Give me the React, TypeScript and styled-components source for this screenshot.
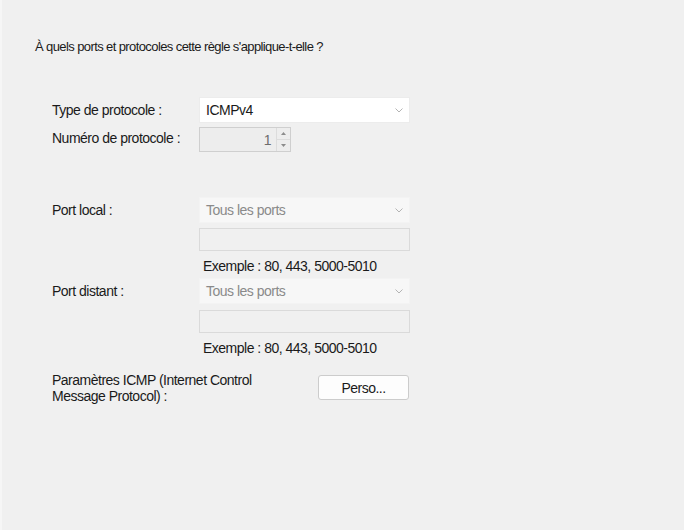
import React from 'react'
import styled, { createGlobalStyle } from 'styled-components'

const GlobalStyle = createGlobalStyle`
    html, body {
        margin: 0;
        padding: 0;
        background: #f0f0f0;
    }
    body {
        font-family: 'Liberation Sans', Arial, sans-serif;
        font-size: 14px;
        color: #1a1a1a;
    }
`

const Page = styled.div`
    width: 684px;
    height: 530px;
    box-sizing: border-box;
    background: #f0f0f0;
    border-left: 2px solid #f6f6f6;
    padding: 38px 0 0 33px;
    letter-spacing: -0.5px;
`

const Heading = styled.div`
    height: 18px;
    line-height: 18px;
    font-size: 13px;
    letter-spacing: -0.6px;
`

const Form = styled.div`
    display: grid;
    grid-template-columns: 147px 211px;
    margin: 41px 0 0 17px;
    align-items: center;
`

const Label = styled.div<{ $top?: number; $pad?: number }>`
    grid-column: 1;
    align-self: ${(p) => (p.$pad !== undefined ? 'start' : 'center')};
    line-height: 16px;
    white-space: nowrap;
    margin-top: ${(p) => p.$top ?? 0}px;
    padding-top: ${(p) => p.$pad ?? 0}px;
`

const Control = styled.div<{ $top?: number }>`
    grid-column: 2;
    margin-top: ${(p) => p.$top ?? 0}px;
`

const Select = styled.div<{ $disabled?: boolean; $top?: number }>`
    height: 26px;
    box-sizing: border-box;
    display: flex;
    align-items: center;
    justify-content: space-between;
    padding: 0 6px;
    margin-top: ${(p) => p.$top ?? 0}px;
    background: ${(p) => (p.$disabled ? '#f7f7f7' : '#ffffff')};
    border: 1px solid ${(p) => (p.$disabled ? '#f3f3f3' : '#ececec')};
    color: ${(p) => (p.$disabled ? '#8a8a8a' : '#1a1a1a')};
`

const Chevron = () => (
    <svg width="8" height="5" viewBox="0 0 8 5">
        <polyline points="0.5,0.5 4,4 7.5,0.5" fill="none" stroke="#b4b4b4" strokeWidth="1" />
    </svg>
)

const Spinner = styled.div`
    width: 92px;
    height: 25px;
    box-sizing: border-box;
    display: flex;
    border: 1px solid #cfcfcf;
    background: #ededed;
    margin-top: 4px;
`

const SpinValue = styled.div`
    flex: 1;
    display: flex;
    align-items: center;
    justify-content: flex-end;
    padding-right: 5px;
    color: #6d6d6d;
`

const SpinButtons = styled.div`
    width: 13px;
    display: flex;
    flex-direction: column;
    border-left: 1px solid #dcdcdc;
`

const SpinButton = styled.div<{ $last?: boolean }>`
    flex: 1;
    display: flex;
    align-items: center;
    justify-content: center;
    border-top: ${(p) => (p.$last ? '1px solid #dcdcdc' : 'none')};
`

const Arrow = ({ up }: { up?: boolean }) => (
    <svg width="5" height="3" viewBox="0 0 5 3">
        <polygon points={up ? '0,3 2.5,0 5,3' : '0,0 2.5,3 5,0'} fill="#8c8c8c" />
    </svg>
)

const TextInput = styled.div<{ $top?: number }>`
    height: 23px;
    box-sizing: border-box;
    border: 1px solid #dadada;
    background: #f0f0f0;
    margin-top: ${(p) => p.$top ?? 5}px;
`

const Hint = styled.div`
    padding-left: 4px;
    height: 16px;
    line-height: 16px;
    margin-top: 7px;
`

const Button = styled.div`
    width: 91px;
    height: 25px;
    box-sizing: border-box;
    margin-left: 119px;
    display: flex;
    align-items: center;
    justify-content: center;
    background: #fdfdfd;
    border: 1px solid #cccccc;
    border-radius: 3px;
`

export default function App() {
    return (
        <>
            <GlobalStyle />
            <Page>
                <Heading>À quels ports et protocoles cette règle s'applique-t-elle ?</Heading>
                <Form>
                    <Label>Type de protocole :</Label>
                    <Control>
                        <Select>
                            ICMPv4
                            <Chevron />
                        </Select>
                    </Control>
                    <Label>Numéro de protocole :</Label>
                    <Control>
                        <Spinner>
                            <SpinValue>1</SpinValue>
                            <SpinButtons>
                                <SpinButton><Arrow up /></SpinButton>
                                <SpinButton $last><Arrow /></SpinButton>
                            </SpinButtons>
                        </Spinner>
                    </Control>

                    <Label $top={45} $pad={5}>Port local :</Label>
                    <Control $top={45}>
                        <Select $disabled>
                            Tous les ports
                            <Chevron />
                        </Select>
                        <TextInput />
                        <Hint>Exemple : 80, 443, 5000-5010</Hint>
                    </Control>

                    <Label $pad={9}>Port distant :</Label>
                    <Control>
                        <Select $disabled $top={4}>
                            Tous les ports
                            <Chevron />
                        </Select>
                        <TextInput $top={6} />
                        <Hint>Exemple : 80, 443, 5000-5010</Hint>
                    </Control>

                    <Label $top={15} $pad={1}>
                        Paramètres ICMP (Internet Control
                        <br />
                        Message Protocol) :
                    </Label>
                    <Control $top={15}>
                        <Button>Perso...</Button>
                    </Control>
                </Form>
            </Page>
        </>
    )
}
